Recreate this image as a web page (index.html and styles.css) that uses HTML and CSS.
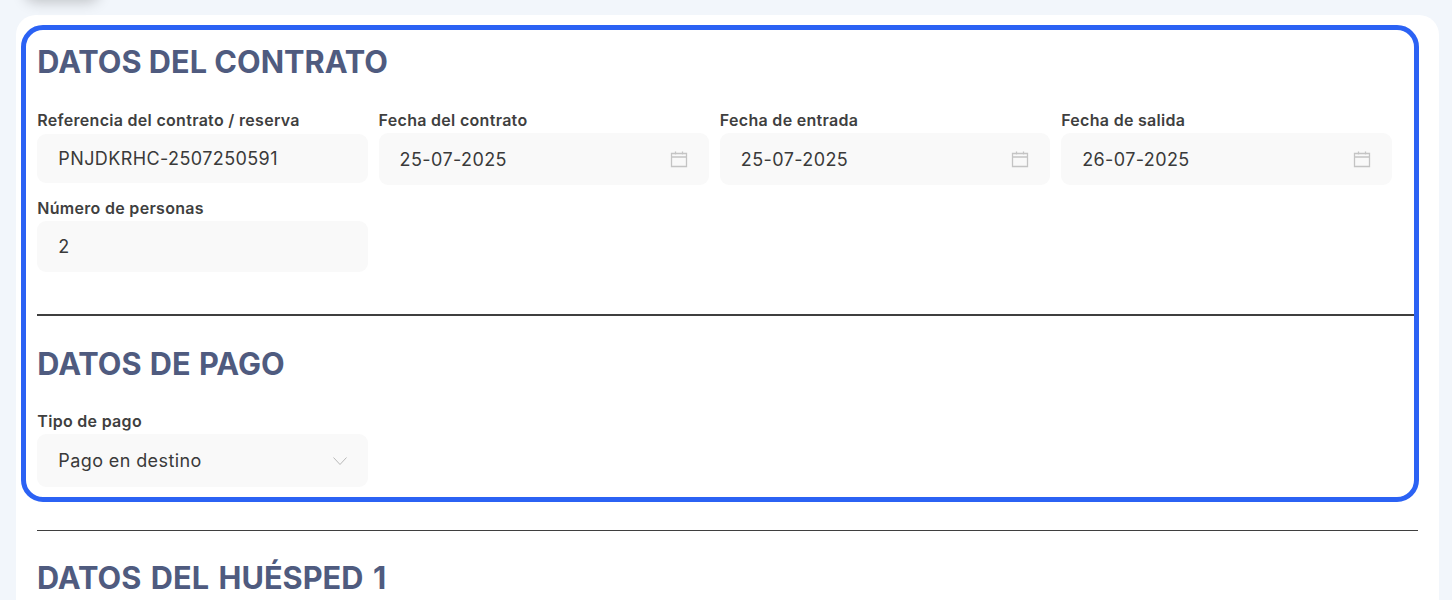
FILE: index.html
```html
<!DOCTYPE html>
<html lang="es">

<head>
    <meta charset="UTF-8">
    <title>Datos del contrato</title>
    <link rel="stylesheet" href="styles.css">
</head>

<body>
    <div class="top_button"></div>

    <main class="card">
        <section class="highlight">
            <h2 class="section_title">DATOS DEL CONTRATO</h2>
            <div class="fields">
                <div class="field">
                    <label>Referencia del contrato / reserva</label>
                    <div class="input input_ref">PNJDKRHC-2507250591</div>
                </div>
                <div class="field">
                    <label>Fecha del contrato</label>
                    <div class="input input_date">
                        <span>25-07-2025</span>
                        <svg class="icon" viewBox="0 0 18 18"><path d="M1.5 3.5h15v13h-15zM1.5 7h15M5.5 1.5v3M12.5 1.5v3"/></svg>
                    </div>
                </div>
                <div class="field">
                    <label>Fecha de entrada</label>
                    <div class="input input_date">
                        <span>25-07-2025</span>
                        <svg class="icon" viewBox="0 0 18 18"><path d="M1.5 3.5h15v13h-15zM1.5 7h15M5.5 1.5v3M12.5 1.5v3"/></svg>
                    </div>
                </div>
                <div class="field">
                    <label>Fecha de salida</label>
                    <div class="input input_date">
                        <span>26-07-2025</span>
                        <svg class="icon" viewBox="0 0 18 18"><path d="M1.5 3.5h15v13h-15zM1.5 7h15M5.5 1.5v3M12.5 1.5v3"/></svg>
                    </div>
                </div>
                <div class="field">
                    <label>Número de personas</label>
                    <div class="input input_num">2</div>
                </div>
            </div>

            <hr class="divider inner">

            <h2 class="section_title pay">DATOS DE PAGO</h2>
            <div class="fields fields_pay">
                <div class="field">
                    <label>Tipo de pago</label>
                    <div class="input input_select">
                        <span>Pago en destino</span>
                        <svg class="chevron" viewBox="0 0 14 8"><path d="M.5 .5l6.500 7 6.500-7"/></svg>
                    </div>
                </div>
            </div>
        </section>

        <hr class="divider outer">

        <h2 class="section_title guest">DATOS DEL HUÉSPED 1</h2>
    </main>
</body>

</html>
```

FILE: styles.css
```css
body {
    margin: 0;
    height: 600px;
    overflow: hidden;
    font-family: "Inter", "Liberation Sans", sans-serif;
    background: #f2f6fb;
    padding: 15px 13px 0 16px;
    box-sizing: border-box;
}

.top_button {
    position: absolute;
    top: -30px;
    left: 25px;
    width: 74px;
    height: 30px;
    border-radius: 10px;
    box-shadow: 0 2px 14px rgba(0, 0, 0, 0.22);
}

.card {
    background: #fff;
    border-radius: 20px 20px 0 0;
    padding: 10px 21px 0 5px;
    height: 600px;
    box-sizing: border-box;
}

.highlight {
    border: 5px solid #2b62f4;
    border-radius: 22px;
    margin-right: -1px;
    padding: 14px 0 10px 11.3px;
    height: 477px;
    box-sizing: border-box;
}

.section_title {
    margin: 0;
    font-size: 30.7px;
    line-height: 36px;
    font-weight: 700;
    color: #4f5b7f;
}

.section_title.pay {
    word-spacing: 1px;
}

.fields {
    display: grid;
    grid-template-columns: repeat(4, 330.6px);
    column-gap: 10.7px;
    row-gap: 14px;
    margin-top: 31px;
}

.fields_pay {
    margin-top: 30px;
}

.field label {
    display: block;
    font-size: 16px;
    line-height: 18px;
    font-weight: 600;
    letter-spacing: 0.3px;
    color: #3f3f3f;
    margin-bottom: 5px;
}

.input {
    display: flex;
    align-items: center;
    justify-content: space-between;
    background: #f9f9f9;
    border-radius: 9px;
    box-sizing: border-box;
    font-size: 18px;
    color: #3a3a3a;
    letter-spacing: 0.4px;
    height: 51px;
    padding: 0 21px;
}

.input_ref {
    height: 49px;
}

.input_date {
    height: 52px;
    margin-top: -1px;
    padding: 0 21px;
}

.input_num {
    margin-top: -1px;
}

.input_select {
    height: 53px;
    margin-top: -1px;
}

.icon {
    width: 18px;
    height: 18px;
    fill: none;
    stroke: #c4c4c4;
    stroke-width: 1.3;
}

.chevron {
    width: 14px;
    height: 8px;
    fill: none;
    stroke: #b8b8b8;
    stroke-width: 1;
}

.divider {
    border: 0;
    height: 2px;
    margin: 0;
    background: #3f3f3f;
}

.divider.inner {
    margin: 42px 0 30px -0.3px;
}

.divider.outer {
    height: 1px;
    margin: 28px 0 0 16px;
}

.guest {
    margin: 29px 0 0 16px;
    word-spacing: 2.3px;
}
```
